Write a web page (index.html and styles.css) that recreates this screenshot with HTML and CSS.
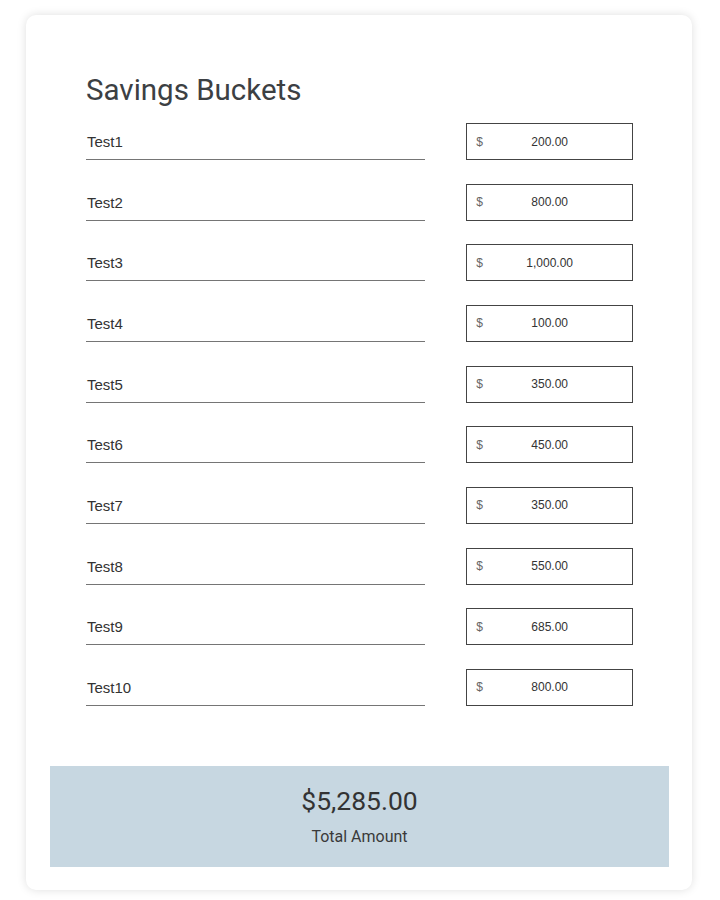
FILE: index.html
```html
<!DOCTYPE html>
<html>
<head>
<meta charset="utf-8">
<link rel="stylesheet" href="styles.css">
</head>
<body>
<div class="card">
  <div class="content">
    <h1 class="title">Savings Buckets</h1>
    <div class="rows">
      <div class="row"><div class="name">Test1</div><div class="amount"><span class="cur">$</span><span class="val">200.00</span></div></div>
      <div class="row"><div class="name">Test2</div><div class="amount"><span class="cur">$</span><span class="val">800.00</span></div></div>
      <div class="row"><div class="name">Test3</div><div class="amount"><span class="cur">$</span><span class="val">1,000.00</span></div></div>
      <div class="row"><div class="name">Test4</div><div class="amount"><span class="cur">$</span><span class="val">100.00</span></div></div>
      <div class="row"><div class="name">Test5</div><div class="amount"><span class="cur">$</span><span class="val">350.00</span></div></div>
      <div class="row"><div class="name">Test6</div><div class="amount"><span class="cur">$</span><span class="val">450.00</span></div></div>
      <div class="row"><div class="name">Test7</div><div class="amount"><span class="cur">$</span><span class="val">350.00</span></div></div>
      <div class="row"><div class="name">Test8</div><div class="amount"><span class="cur">$</span><span class="val">550.00</span></div></div>
      <div class="row"><div class="name">Test9</div><div class="amount"><span class="cur">$</span><span class="val">685.00</span></div></div>
      <div class="row"><div class="name">Test10</div><div class="amount"><span class="cur">$</span><span class="val">800.00</span></div></div>
    </div>
  </div>
  <div class="total">
    <div class="total-value">$5,285.00</div>
    <div class="total-label">Total Amount</div>
  </div>
</div>
</body>
</html>
```
FILE: styles.css
```css
html, body {
  margin: 0;
  padding: 0;
  background: #ffffff;
}
body {
  padding: 15px 28px 10px 26px;
  font-family: Roboto, "Liberation Sans", sans-serif;
}
.card {
  width: 666px;
  box-sizing: border-box;
  background: #ffffff;
  border-radius: 10px;
  box-shadow: 0 0 10px rgba(0, 0, 0, 0.13);
  padding: 0 23px 23px 24px;
}
.content {
  padding: 0 36px 0 36px;
}
.title {
  margin: 0;
  padding-top: 57px;
  font-family: Roboto, sans-serif;
  font-weight: 400;
  font-size: 29.5px;
  line-height: 36px;
  color: #3c4043;
}
.rows {
  display: flex;
  flex-direction: column;
  gap: 23.67px;
  margin-top: 15px;
}
.row {
  display: flex;
  align-items: stretch;
  height: 37px;
}
.name {
  width: 340px;
  box-sizing: border-box;
  border-bottom: 1px solid #757575;
  font-family: "Liberation Sans", Arial, sans-serif;
  font-size: 15px;
  color: #333;
  padding-left: 1px;
  display: flex;
  align-items: center;
  padding-top: 1px;
}
.amount {
  margin-left: 41px;
  width: 167px;
  box-sizing: border-box;
  border: 1px solid #444;
  position: relative;
  display: flex;
  align-items: center;
  justify-content: center;
  font-family: "Liberation Sans", Arial, sans-serif;
  font-size: 12px;
  color: #333;
}
.cur {
  position: absolute;
  left: 9px;
  top: 50%;
  transform: translateY(-50%);
  color: #666;
}
.total {
  margin-top: 60px;
  background: #c7d7e1;
  height: 101px;
  display: flex;
  flex-direction: column;
  align-items: center;
  padding-top: 20px;
  box-sizing: border-box;
  color: #333;
}
.total-value {
  font-family: Roboto, sans-serif;
  font-size: 26.5px;
  line-height: 30px;
}
.total-label {
  font-family: Roboto, sans-serif;
  font-size: 16px;
  line-height: 20px;
  margin-top: 11px;
  color: #3a3a3a;
}
```
